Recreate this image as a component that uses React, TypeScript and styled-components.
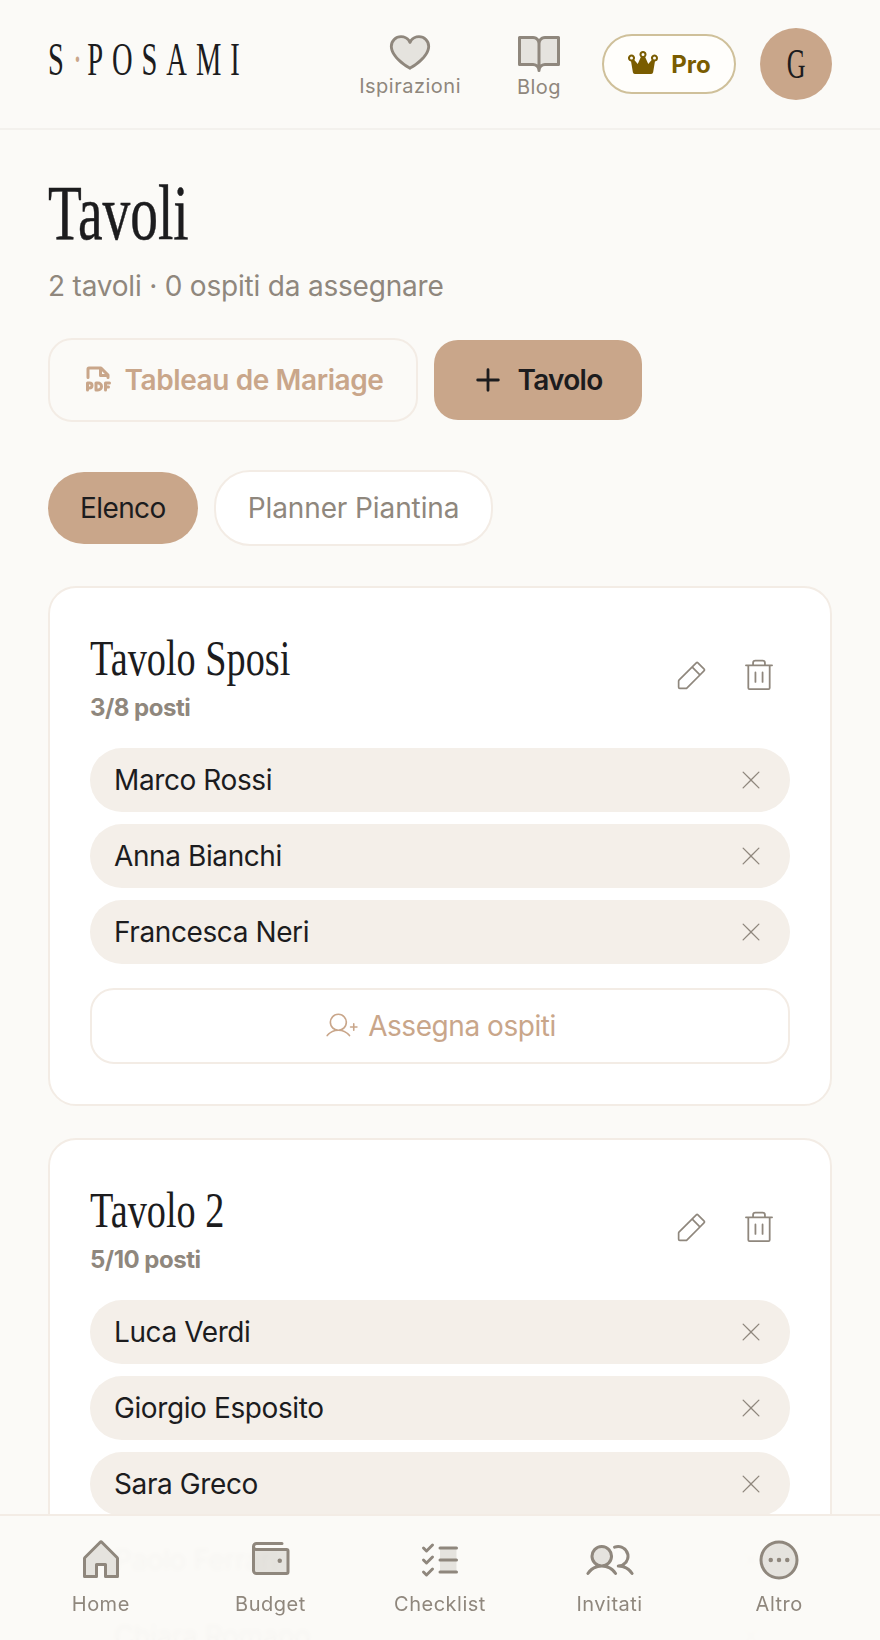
import styled, { createGlobalStyle } from 'styled-components';
import {
  PiHeartDuotone, PiBookOpenDuotone, PiCrownFill, PiFilePdfBold, PiPlusBold, PiPencilSimpleLight, PiTrashLight, PiXLight,
  PiUserPlusLight, PiHouseDuotone, PiWalletDuotone, PiListChecksDuotone, PiUsersDuotone, PiDotsThreeCircleDuotone,
} from 'react-icons/pi';

const tan = '#c9a68a';
const ink = '#1c1c1e';
const grey = '#8f877d';
const line = '#f3ece5';
const sans = '"Inter", "Liberation Sans", sans-serif';
const serif = '"Liberation Serif", serif';

const GlobalStyle = createGlobalStyle`
  html, body { margin: 0; padding: 0; height: 100%; overflow: hidden; background: #fbfaf7; }
  #root { height: 100%; }
  * { box-sizing: border-box; }
`;

const Page = styled.div`
  height: 100vh;
  overflow: hidden;
  font-family: ${sans};
  color: ${ink};
`;

const Header = styled.header`
  height: 130px;
  padding: 28px 48px 0;
  display: flex;
  align-items: flex-start;
  justify-content: space-between;
  border-bottom: 2px solid #f3f1ed;
`;

const Logo = styled.div`
  margin-top: 9px;
  width: 192px;
  font: 400 46px/46px ${serif};
  letter-spacing: 14.4px;
  white-space: nowrap;
  transform: scaleX(0.62);
  transform-origin: left top;
`;

const LogoDot = styled.span`
  color: ${tan};
  letter-spacing: 8px;
`;

const HeaderRight = styled.div`
  display: flex;
  align-items: center;
`;

const TopLink = styled.a<{ $gap: number }>`
  display: flex;
  flex-direction: column;
  align-items: center;
  margin-right: ${p => p.$gap}px;
  margin-top: -2px;
  font-size: 20px;
  line-height: 24px;
  letter-spacing: 0.5px;
  color: ${grey};
  svg { display: block; }
`;

const ProButton = styled.button`
  width: 134px;
  height: 60px;
  margin-right: 24px;
  display: flex;
  align-items: center;
  justify-content: center;
  gap: 12px;
  border: 2px solid #cfc09a;
  border-radius: 30px;
  background: #fffefb;
  color: #7a5c00;
  font: 700 24px ${sans};
`;

const Avatar = styled.div`
  width: 72px;
  height: 72px;
  border-radius: 50%;
  background: ${tan};
  display: flex;
  align-items: center;
  justify-content: center;
  font: 400 42px ${serif};
`;

const AvatarLetter = styled.span`
  display: inline-block;
  transform: scaleX(0.62);
`;

const Main = styled.main`
  padding: 40px 48px 0;
`;

const Title = styled.h1`
  margin: 0;
  font: 400 78px/86px ${serif};
  -webkit-text-stroke: 0.5px ${ink};
  transform: scaleX(0.71);
  transform-origin: left center;
`;

const Subtitle = styled.p`
  margin: 10px 0 0;
  font-size: 28px;
  line-height: 40px;
  letter-spacing: -0.2px;
  color: ${grey};
`;

const Actions = styled.div`
  margin-top: 32px;
  display: flex;
  align-items: center;
  gap: 16px;
`;

const PdfButton = styled.button`
  width: 370px;
  height: 84px;
  display: flex;
  align-items: center;
  justify-content: center;
  gap: 10px;
  border: 2px solid ${line};
  border-radius: 24px;
  background: transparent;
  color: ${tan};
  font: 600 28px ${sans};
  letter-spacing: -0.4px;
`;

const AddButton = styled.button`
  width: 208px;
  height: 80px;
  display: flex;
  align-items: center;
  justify-content: center;
  gap: 14px;
  border: 0;
  border-radius: 24px;
  background: ${tan};
  color: ${ink};
  font: 600 28px ${sans};
  letter-spacing: -0.7px;
`;

const Tabs = styled.div`
  margin-top: 48px;
  display: flex;
  align-items: center;
  gap: 16px;
`;

const Tab = styled.button<{ $active?: boolean }>`
  height: ${p => (p.$active ? 72 : 76)}px;
  padding: 0 32px;
  border: ${p => (p.$active ? '0' : `2px solid ${line}`)};
  border-radius: 36px;
  background: ${p => (p.$active ? tan : '#fff')};
  color: ${p => (p.$active ? ink : grey)};
  font: 400 28px ${sans};
  letter-spacing: ${p => (p.$active ? -0.6 : -0.1)}px;
`;

const Card = styled.section`
  margin-top: 40px;
  padding: 40px;
  background: #fff;
  border: 2px solid ${line};
  border-radius: 28px;
  & + & { margin-top: 32px; }
`;

const CardHead = styled.div`
  display: flex;
  align-items: center;
  justify-content: space-between;
  margin-bottom: 24px;
`;

const CardName = styled.h2`
  margin: 0;
  font: 400 50px/60px ${serif};
  white-space: nowrap;
  transform: scaleX(0.765);
  transform-origin: left center;
`;

const Seats = styled.div`
  margin-top: 4px;
  font-size: 24px;
  line-height: 32px;
  font-weight: 700;
  letter-spacing: -0.5px;
  color: ${grey};
`;

const CardTools = styled.div`
  display: flex;
  align-items: center;
  gap: 31px;
  margin-right: 12px;
  color: ${grey};
`;

const Guests = styled.div`
  display: flex;
  flex-direction: column;
  gap: 12px;
`;

const Guest = styled.div`
  height: 64px;
  padding: 0 24px;
  display: flex;
  align-items: center;
  justify-content: space-between;
  border-radius: 32px;
  background: #f4efe9;
  font-size: 28px;
  letter-spacing: -0.4px;
`;

const RemoveIcon = styled(PiXLight)`
  color: ${grey};
  margin-right: 1px;
`;

const AssignButton = styled.button`
  width: 100%;
  height: 76px;
  margin-top: 24px;
  display: flex;
  align-items: center;
  justify-content: center;
  gap: 10px;
  border: 2px solid ${line};
  border-radius: 24px;
  background: #fff;
  color: ${tan};
  font: 400 28px ${sans};
  letter-spacing: -0.45px;
`;

const BottomNav = styled.nav`
  position: fixed;
  left: 0;
  right: 0;
  bottom: 0;
  height: 126px;
  padding: 20px 16px 0;
  display: grid;
  grid-template-columns: repeat(5, 1fr);
  border-top: 2px solid ${line};
  background: rgba(251, 250, 247, 0.98);
  backdrop-filter: blur(2px);
`;

const NavItem = styled.a`
  display: flex;
  flex-direction: column;
  align-items: center;
  gap: 6px;
  font-size: 20px;
  line-height: 28px;
  letter-spacing: 0.5px;
  color: ${grey};
  svg { display: block; }
`;

type Table = { name: string; seats: string; guests: string[] };

const tables: Table[] = [
  { name: 'Tavolo Sposi', seats: '3/8 posti', guests: ['Marco Rossi', 'Anna Bianchi', 'Francesca Neri'] },
  { name: 'Tavolo 2', seats: '5/10 posti', guests: ['Luca Verdi', 'Giorgio Esposito', 'Sara Greco', 'Paolo Ferrari', 'Chiara Romano'] },
];

const navItems = [
  { label: 'Home', Icon: PiHouseDuotone },
  { label: 'Budget', Icon: PiWalletDuotone },
  { label: 'Checklist', Icon: PiListChecksDuotone },
  { label: 'Invitati', Icon: PiUsersDuotone },
  { label: 'Altro', Icon: PiDotsThreeCircleDuotone },
];

export default function App() {
  return (
    <Page>
      <GlobalStyle />
      <Header>
        <Logo>S<LogoDot>·</LogoDot>POSAMI</Logo>
        <HeaderRight>
          <TopLink $gap={54}><PiHeartDuotone size={46} />Ispirazioni</TopLink>
          <TopLink $gap={39}><PiBookOpenDuotone size={48} />Blog</TopLink>
          <ProButton><PiCrownFill size={32} />Pro</ProButton>
          <Avatar><AvatarLetter>G</AvatarLetter></Avatar>
        </HeaderRight>
      </Header>
      <Main>
        <Title>Tavoli</Title>
        <Subtitle>2 tavoli · 0 ospiti da assegnare</Subtitle>
        <Actions>
          <PdfButton><PiFilePdfBold size={32} />Tableau de Mariage</PdfButton>
          <AddButton><PiPlusBold size={30} />Tavolo</AddButton>
        </Actions>
        <Tabs>
          <Tab $active>Elenco</Tab>
          <Tab>Planner Piantina</Tab>
        </Tabs>
        {tables.map(table => (
          <Card key={table.name}>
            <CardHead>
              <div>
                <CardName>{table.name}</CardName>
                <Seats>{table.seats}</Seats>
              </div>
              <CardTools>
                <PiPencilSimpleLight size={36} />
                <PiTrashLight size={38} />
              </CardTools>
            </CardHead>
            <Guests>
              {table.guests.map(guest => (
                <Guest key={guest}>{guest}<RemoveIcon size={28} /></Guest>
              ))}
            </Guests>
            <AssignButton><PiUserPlusLight size={34} />Assegna ospiti</AssignButton>
          </Card>
        ))}
      </Main>
      <BottomNav>
        {navItems.map(({ label, Icon }) => (
          <NavItem key={label}><Icon size={48} />{label}</NavItem>
        ))}
      </BottomNav>
    </Page>
  );
}
